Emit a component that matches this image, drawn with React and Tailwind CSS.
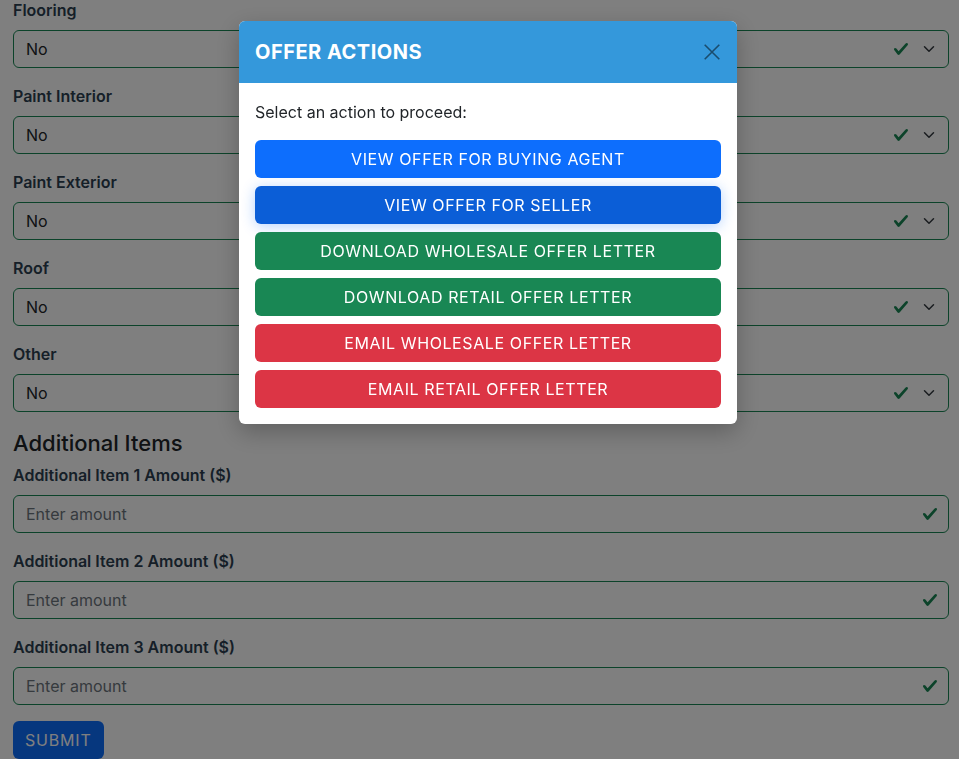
import React from 'react';

const repairFields = ['Flooring', 'Paint Interior', 'Paint Exterior', 'Roof', 'Other'];
const extraFields = ['Additional Item 1 Amount ($)', 'Additional Item 2 Amount ($)', 'Additional Item 3 Amount ($)'];

const actions = [
  { label: 'View Offer for Buying Agent', cls: 'bg-[#0d6efd]' },
  { label: 'View Offer for Seller', cls: 'bg-[#0b5ed7] shadow-[0_2px_14px_rgba(13,110,253,0.3)]' },
  { label: 'Download Wholesale Offer Letter', cls: 'bg-[#198754]' },
  { label: 'Download Retail Offer Letter', cls: 'bg-[#198754]' },
  { label: 'Email Wholesale Offer Letter', cls: 'bg-[#dc3545]' },
  { label: 'Email Retail Offer Letter', cls: 'bg-[#dc3545]' },
];

function ValidCheck() {
  return (
    <svg width="16" height="16" viewBox="0 0 8 8" className="shrink-0">
      <path fill="#198754" d="M2.3 6.73.6 4.53c-.4-1.04.46-1.4 1.1-.8l1.1 1.4 3.4-3.8c.6-.63 1.6-.27 1.2.7l-4 4.6c-.43.5-.8.4-1.1.1z" />
    </svg>
  );
}

function Chevron() {
  return (
    <svg width="16" height="12" viewBox="0 0 16 16" className="shrink-0">
      <path fill="none" stroke="#343a40" strokeLinecap="round" strokeLinejoin="round" strokeWidth="2" d="m2 5 6 6 6-6" />
    </svg>
  );
}

function SelectField({ label }) {
  return (
    <div className="mb-4">
      <div className="mb-2 text-base leading-6 font-semibold text-[#2c3e50]">{label}</div>
      <div className="flex items-center h-[38px] border border-[#198754] rounded-md pl-3 pr-[11px]">
        <span className="flex-1 text-base text-[#212529]">No</span>
        <ValidCheck />
        <span className="ml-[12px]"><Chevron /></span>
      </div>
    </div>
  );
}

function AmountField({ label }) {
  return (
    <div className="mb-4">
      <div className="mb-2 text-base leading-6 font-semibold text-[#2c3e50]">{label}</div>
      <div className="flex items-center h-[38px] border border-[#198754] rounded-md pl-3 pr-[10px]">
        <span className="flex-1 text-base text-[#6c757d]">Enter amount</span>
        <ValidCheck />
      </div>
    </div>
  );
}

export default function App() {
  return (
    <div className="min-h-screen bg-white font-['Inter',sans-serif] text-[#212529] overflow-hidden">
      {/* Form behind the modal */}
      <div className="pl-[13px] pr-[10px] -mt-[2px]">
        {repairFields.map((f) => (
          <SelectField key={f} label={f} />
        ))}
        <h4 className="mt-[17px] mb-[5px] text-[22px] leading-[29px] font-medium">Additional Items</h4>
        {extraFields.map((f) => (
          <AmountField key={f} label={f} />
        ))}
        <button className="h-[38px] px-3 rounded-md bg-[#0d6efd] text-white text-base uppercase tracking-[0.8px]">
          Submit
        </button>
      </div>

      {/* Backdrop */}
      <div className="fixed inset-0 bg-black/50" />

      {/* Modal */}
      <div className="fixed left-[239px] top-[21px] w-[498px] bg-white rounded-md shadow-[0_8px_24px_rgba(0,0,0,0.25)] overflow-hidden">
        <div className="h-[62px] bg-[#3498db] flex items-center justify-between pl-4 pr-4">
          <h5 className="text-white text-[20px] font-bold tracking-[0.5px]">OFFER ACTIONS</h5>
          <svg width="18" height="18" viewBox="0 0 16 16">
            <path fill="none" stroke="#1a4c6d" strokeWidth="1.4" d="M1.5 1.5l13 13M14.5 1.5l-13 13" />
          </svg>
        </div>
        <div className="px-4 pt-[17px] pb-4">
          <p className="text-base leading-6 mb-[16px]">Select an action to proceed:</p>
          <div className="flex flex-col gap-2">
            {actions.map((a) => (
              <button
                key={a.label}
                className={`h-[38px] w-full rounded-md text-white text-base uppercase tracking-[0.6px] ${a.cls}`}
              >
                {a.label}
              </button>
            ))}
          </div>
        </div>
      </div>
    </div>
  );
}
